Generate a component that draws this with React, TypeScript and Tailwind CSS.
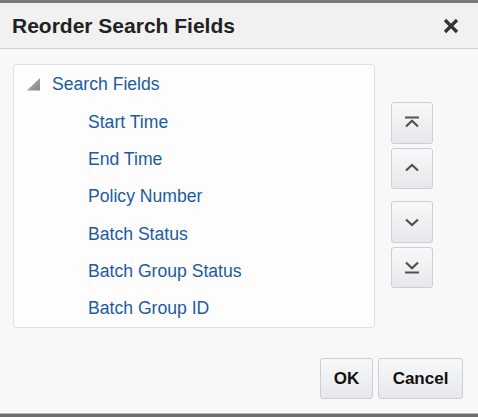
import React from 'react';

const fields = ['Start Time', 'End Time', 'Policy Number', 'Batch Status', 'Batch Group Status', 'Batch Group ID'];

const MoveButton: React.FC<{ children: React.ReactNode; label: string }> = ({ children, label }) => (
  <button
    aria-label={label}
    className="w-[42px] h-[41.5px] flex items-center justify-center rounded-[3px] border border-[#c8cfd6] bg-gradient-to-b from-[#f7f8f9] to-[#e6e8eb]"
  >
    {children}
  </button>
);

const Icon: React.FC<{ kind: 'top' | 'up' | 'down' | 'bottom' }> = ({ kind }) => (
  <svg width="20" height="14" viewBox="0 0 20 14" className="text-[#505050]">
    {kind === 'top' && (
      <>
        <line x1="3" y1="1.5" x2="17" y2="1.5" stroke="currentColor" strokeWidth="2" />
        <polyline points="4,10.5 10,4.8 16,10.5" fill="none" stroke="currentColor" strokeWidth="2.2" />
      </>
    )}
    {kind === 'up' && (
      <polyline points="4,9.5 10,4 16,9.5" fill="none" stroke="currentColor" strokeWidth="2.2" />
    )}
    {kind === 'down' && (
      <polyline points="4,4.5 10,10 16,4.5" fill="none" stroke="currentColor" strokeWidth="2.2" />
    )}
    {kind === 'bottom' && (
      <>
        <polyline points="4,2.5 10,8.2 16,2.5" fill="none" stroke="currentColor" strokeWidth="2.2" />
        <line x1="3" y1="12.5" x2="17" y2="12.5" stroke="currentColor" strokeWidth="2" />
      </>
    )}
  </svg>
);

export default function App() {
  return (
    <div className="w-[478px] h-[417px] flex flex-col bg-[#f8f8f8] font-['Liberation_Sans',Arial,sans-serif]">
      {/* top edge */}
      <div className="h-[3px] bg-[#7a7a7a]" />

      {/* header */}
      <div className="h-[46px] flex items-center justify-between pl-[12px] pr-[19px] bg-[#f1f1f1] border-b border-[#c6d2dd]">
        <h1 className="text-[21px] font-bold text-[#222]">Reorder Search Fields</h1>
        <svg width="16" height="16" viewBox="0 0 16 16" className="mt-[1px]">
          <path d="M2 2 L14 14 M14 2 L2 14" stroke="#333" strokeWidth="3.2" />
        </svg>
      </div>

      {/* body */}
      <div className="flex-1 flex flex-col">
        <div className="flex pt-[15px] pl-[13px]">
          <div className="w-[362px] h-[264px] border border-[#dde2e8] rounded-[3px] bg-[#fdfdfe]">
            <div className="h-[38.6px] flex items-center">
              <svg width="14" height="13" viewBox="0 0 14 13" className="ml-[13px] mr-[11px]">
                <defs>
                  <linearGradient id="tri" x1="0" y1="0" x2="1" y2="1">
                    <stop offset="0" stopColor="#b0b0b0" />
                    <stop offset="1" stopColor="#858585" />
                  </linearGradient>
                </defs>
                <polygon points="13,0 13,12.5 0,12.5" fill="url(#tri)" />
              </svg>
              <span className="text-[17.6px] text-[#1b5c9c]">Search Fields</span>
            </div>
            <ul>
              {fields.map((f) => (
                <li key={f} className="h-[37.2px] flex items-center pl-[74px] text-[17.6px] text-[#1b5c9c]">
                  {f}
                </li>
              ))}
            </ul>
          </div>

          <div className="ml-[16px] mt-[38px] flex flex-col">
            <div className="flex flex-col gap-[4px]">
              <MoveButton label="Move to top"><Icon kind="top" /></MoveButton>
              <MoveButton label="Move up"><Icon kind="up" /></MoveButton>
            </div>
            <div className="flex flex-col gap-[4px] mt-[12px]">
              <MoveButton label="Move down"><Icon kind="down" /></MoveButton>
              <MoveButton label="Move to bottom"><Icon kind="bottom" /></MoveButton>
            </div>
          </div>
        </div>

        <div className="flex justify-end gap-[5px] pr-[15px] mt-[30px]">
          <button className="w-[53px] h-[41px] rounded-[3px] border border-[#c8cfd6] bg-gradient-to-b from-[#f7f8f9] to-[#e6e8eb] text-[17px] font-bold text-[#111]">
            OK
          </button>
          <button className="w-[85px] h-[41px] rounded-[3px] border border-[#c8cfd6] bg-gradient-to-b from-[#f7f8f9] to-[#e6e8eb] text-[17px] font-bold text-[#111]">
            Cancel
          </button>
        </div>
      </div>

      {/* bottom edge */}
      <div className="h-[1px] bg-[#a9bccb]" />
      <div className="h-[3px] bg-[#6e6e6e]" />
    </div>
  );
}
